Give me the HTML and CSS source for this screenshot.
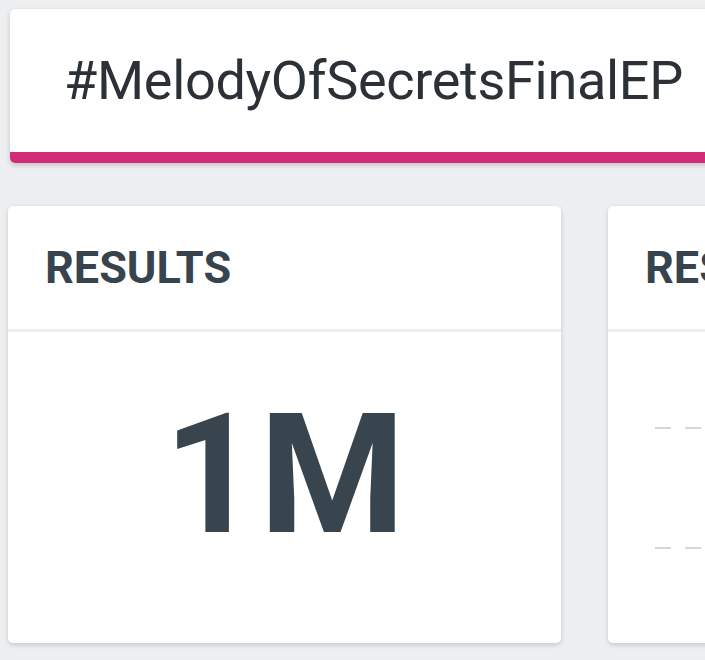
FILE: index.html
```html
<!DOCTYPE html>
<html>
<head>
<meta charset="utf-8">
<link rel="stylesheet" href="styles.css">
</head>
<body>
<div class="page">
  <div class="tag-card">
    <div class="tag-text">#MelodyOfSecretsFinalEP</div>
    <div class="tag-bar"></div>
  </div>
  <div class="grid">
    <div class="card">
      <div class="card-head">RESULTS</div>
      <div class="card-body big">
        <div class="big-value">1M</div>
      </div>
    </div>
    <div class="card">
      <div class="card-head">RESULTS</div>
      <div class="card-body list">
        <div class="dash-row"><span class="dash"></span><span class="dash"></span></div>
        <div class="dash-row"><span class="dash"></span><span class="dash"></span></div>
      </div>
    </div>
  </div>
</div>
</body>
</html>
```
FILE: styles.css
```css
html, body {
  margin: 0;
  padding: 0;
  background: #eceef0;
  overflow: hidden;
  width: 705px;
  height: 660px;
}
body {
  font-family: Roboto, "Liberation Sans", sans-serif;
  color: #37444d;
}
.page {
  padding: 9px 0 0 8px;
  width: 1300px;
}
.tag-card {
  margin-left: 2px;
  width: 1200px;
  background: #fff;
  border-radius: 5px;
  overflow: hidden;
  box-shadow: 0 2px 5px rgba(0, 0, 0, 0.18);
  display: flex;
  flex-direction: column;
}
.tag-text {
  height: 143px;
  display: flex;
  align-items: center;
  padding-left: 54px;
  font-size: 54px;
  letter-spacing: -0.3px;
  color: #2b3137;
  font-weight: 400;
}
.tag-bar {
  height: 11px;
  background: #d22c78;
}
.grid {
  margin-top: 43px;
  display: grid;
  grid-template-columns: 553px 553px;
  column-gap: 47px;
}
.card {
  background: #fff;
  border-radius: 5px;
  box-shadow: 0 2px 5px rgba(0, 0, 0, 0.16);
  height: 437px;
  display: flex;
  flex-direction: column;
}
.card-head {
  border-bottom: 3px solid #eeeeee;
  display: flex;
  align-items: center;
  padding-left: 37px;
  font-size: 45px;
  font-weight: 700;
  box-sizing: border-box;
  height: 126px;
}
.card-body {
  flex: 1;
}
.big {
  display: flex;
  justify-content: center;
  align-items: center;
  padding-bottom: 24px;
}
.big-value {
  font-size: 167px;
  font-weight: 700;
  line-height: 1;
  color: #38454e;
}
.list {
  padding: 95px 0 0 47px;
  display: flex;
  flex-direction: column;
  gap: 118px;
}
.dash-row {
  display: flex;
  gap: 14px;
}
.dash {
  width: 16px;
  height: 2px;
  background: #d6d6d6;
}
```
